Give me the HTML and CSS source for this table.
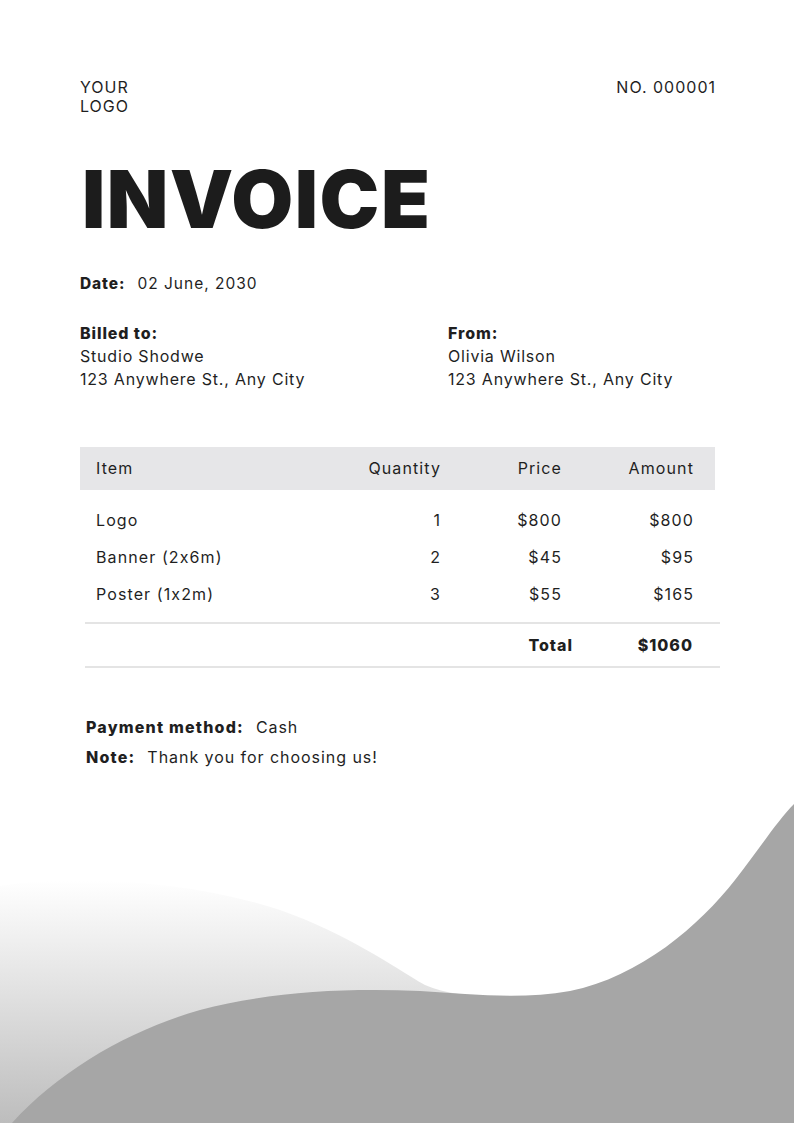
FILE: index.html
```html
<!DOCTYPE html>
<html lang="en">
<head>
<meta charset="utf-8">
<title>Invoice</title>
<link rel="stylesheet" href="styles.css">
</head>
<body>
<div class="page">
  <header class="top">
    <div class="logo">YOUR<br>LOGO</div>
    <div class="number">NO. 000001</div>
  </header>

  <h1 class="title">INVOICE</h1>

  <p class="date"><span class="label">Date:</span><span class="value">02 June, 2030</span></p>

  <section class="parties">
    <div class="party">
      <div class="label">Billed to:</div>
      <div>Studio Shodwe</div>
      <div>123 Anywhere St., Any City</div>
    </div>
    <div class="party">
      <div class="label">From:</div>
      <div>Olivia Wilson</div>
      <div>123 Anywhere St., Any City</div>
    </div>
  </section>

  <section class="items">
    <div class="row head">
      <div>Item</div><div class="num">Quantity</div><div class="num">Price</div><div class="num">Amount</div>
    </div>
    <div class="body">
      <div class="row"><div>Logo</div><div class="num">1</div><div class="num">$800</div><div class="num">$800</div></div>
      <div class="row"><div>Banner (2x6m)</div><div class="num">2</div><div class="num">$45</div><div class="num">$95</div></div>
      <div class="row"><div>Poster (1x2m)</div><div class="num">3</div><div class="num">$55</div><div class="num">$165</div></div>
    </div>
    <div class="total">
      <div></div><div class="num label">Total</div><div class="num label">$1060</div>
    </div>
  </section>

  <section class="payment">
    <p><span class="label">Payment method:</span><span class="value">Cash</span></p>
    <p><span class="label">Note:</span><span class="value">Thank you for choosing us!</span></p>
  </section>

  <svg class="wave" viewBox="0 790 794 333" preserveAspectRatio="none" aria-hidden="true">
    <defs>
      <linearGradient id="fade" x1="0" y1="880" x2="0" y2="1123" gradientUnits="userSpaceOnUse">
        <stop offset="0" stop-color="#ffffff"/>
        <stop offset="0.45" stop-color="#e2e2e2"/>
        <stop offset="1" stop-color="#bdbdbd"/>
      </linearGradient>
    </defs>
    <path fill="url(#fade)" d="M0,886 C70,874 190,880 280,910 C350,935 390,965 425,985 C445,994 470,996 500,997 L500,1123 L0,1123 Z"/>
    <path fill="#a6a6a6" d="M794,804 L794,1123 L12,1123 C60,1070 130,1030 200,1010 C270,992 340,988 420,991 C470,994 520,1000 570,991 C640,977 700,925 735,880 C760,848 778,820 794,804 Z"/>
  </svg>
</div>
</body>
</html>
```

FILE: styles.css
```css
* { box-sizing: border-box; }

html, body {
  margin: 0;
  padding: 0;
  background: #ffffff;
}

body {
  font-family: Inter, "Liberation Sans", sans-serif;
  font-size: 16px;
  color: #1f1f1f;
}

p { margin: 0; }

.page {
  width: 794px;
  height: 1123px;
  overflow: hidden;
  display: flex;
  flex-direction: column;
  padding: 78px 79px 0 80px;
}

.top {
  display: flex;
  justify-content: space-between;
  align-items: flex-start;
  font-size: 16px;
  line-height: 19px;
  letter-spacing: 1px;
}

.top .number { margin-right: -1px; }

.title {
  margin: 43px 0 0 2px;
  font-size: 80px;
  line-height: 80px;
  font-weight: 900;
  letter-spacing: 1.5px;
  color: #1c1c1c;
}

.label {
  font-weight: 800;
  letter-spacing: 0.9px;
}

.date {
  margin-top: 33px;
  line-height: 23px;
  font-size: 15.5px;
}

.date .value { margin-left: 12px; letter-spacing: 1px; }

.parties {
  margin-top: 27px;
  display: grid;
  grid-template-columns: 368px 1fr;
  line-height: 23px;
  font-size: 16px;
  letter-spacing: 0.8px;
}

.items {
  margin-top: 56px;
  font-size: 16px;
  letter-spacing: 1.1px;
}

.row {
  display: grid;
  grid-template-columns: 224px 120px 121px 132px;
  padding: 0 22px 0 16px;
  height: 37px;
  align-items: center;
}

.row .num { margin-right: -1px; }

.row.head {
  height: 43px;
  background: #e6e6e8;
  padding-bottom: 2px;
}

.num { text-align: right; }

.body {
  padding-top: 11px;
  padding-bottom: 10px;
  border-bottom: 2px solid #e4e4e4;
  margin-left: 5px;
  margin-right: -5px;
}

.body .row { padding-left: 11px; padding-right: 27px; }

.total {
  display: grid;
  grid-template-columns: 1fr 120px 120px;
  padding-right: 27px;
  height: 44px;
  align-items: center;
  margin-left: 5px;
  margin-right: -5px;
  border-bottom: 2px solid #e4e4e4;
}

.total .label { letter-spacing: 1px; }

.payment {
  margin-top: 44px;
  margin-left: 6px;
  line-height: 30px;
  font-size: 16px;
  letter-spacing: 0.95px;
}

.payment .label { letter-spacing: 1.2px; }

.payment .value { margin-left: 12px; }

.wave {
  margin-top: auto;
  margin-left: -80px;
  width: 794px;
  height: 333px;
  display: block;
  flex-shrink: 0;
}
```
